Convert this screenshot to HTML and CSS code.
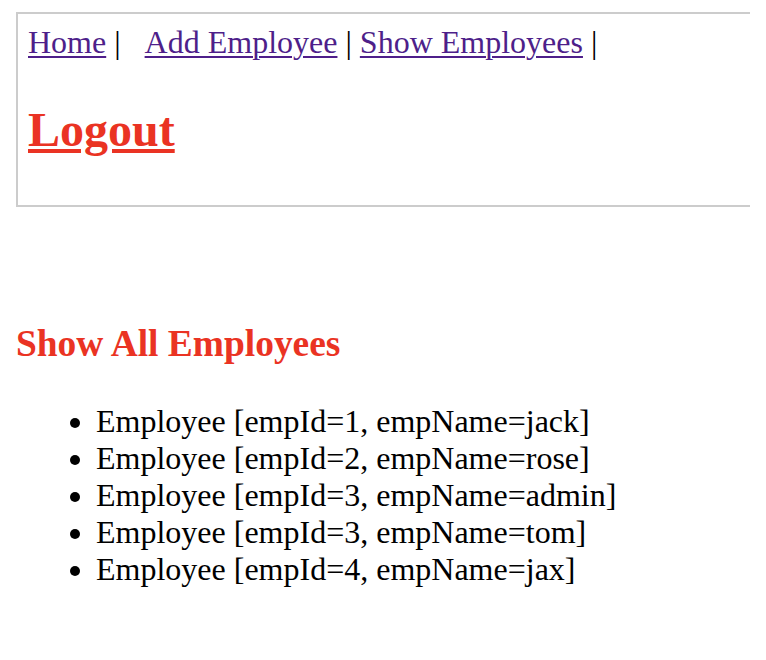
FILE: index.html
```html
<!DOCTYPE html>
<html>
<head>
<meta charset="utf-8">
<title>Show Employees</title>
<link rel="stylesheet" href="styles.css">
</head>
<body>
<div class="header">
  <div class="nav"><a href="#" class="nav-link">Home</a> |&nbsp;&nbsp;&nbsp;<a href="#" class="nav-link">Add Employee</a> | <a href="#" class="nav-link">Show Employees</a> |</div>
  <h2 class="logout"><a href="#" class="logout-link">Logout</a></h2>
</div>
<h3 class="title">Show All Employees</h3>
<ul class="emp-list">
  <li>Employee [empId=1, empName=jack]</li>
  <li>Employee [empId=2, empName=rose]</li>
  <li>Employee [empId=3, empName=admin]</li>
  <li>Employee [empId=3, empName=tom]</li>
  <li>Employee [empId=4, empName=jax]</li>
</ul>
</body>
</html>
```
FILE: styles.css
```css
html {
  background: #ffffff;
}
body {
  margin: 12px 16px 0 16px;
  font-family: "Liberation Serif", "Times New Roman", serif;
  font-size: 32px;
  color: #000000;
}
.header {
  border: 2px solid #cccccc;
  border-right: none;
  padding: 10px;
  margin-right: -16px;
}
.nav {
  line-height: normal;
}
.nav-link {
  color: #4e1f8a;
  text-decoration: underline;
  text-decoration-thickness: 2px;
  text-underline-offset: 3px;
}
.logout {
  font-size: 48px;
  font-weight: bold;
  margin: 41px 0 38px 0;
}
.logout-link {
  color: #ea3323;
  text-decoration: underline;
  text-decoration-thickness: 4px;
  text-underline-offset: 3px;
}
.title {
  color: #ea3323;
  font-size: 37.44px;
  font-weight: bold;
  margin: 115px 0 38px 0;
}
.emp-list {
  margin: 0;
  padding-left: 80px;
  list-style: disc;
}
.emp-list li {
  line-height: normal;
}
```
